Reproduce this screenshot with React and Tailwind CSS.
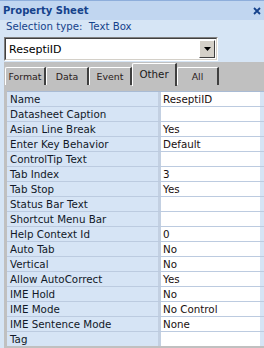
import React from "react";

const rows = [
  ["Name", "ReseptiID"],
  ["Datasheet Caption", ""],
  ["Asian Line Break", "Yes"],
  ["Enter Key Behavior", "Default"],
  ["ControlTip Text", ""],
  ["Tab Index", "3"],
  ["Tab Stop", "Yes"],
  ["Status Bar Text", ""],
  ["Shortcut Menu Bar", ""],
  ["Help Context Id", "0"],
  ["Auto Tab", "No"],
  ["Vertical", "No"],
  ["Allow AutoCorrect", "Yes"],
  ["IME Hold", "No"],
  ["IME Mode", "No Control"],
  ["IME Sentence Mode", "None"],
  ["Tag", ""],
];

function Tab({ label, w }) {
  return (
    <div
      className={`${w} h-[18px] flex items-center justify-center border-t border-l border-t-white border-l-white border-r-2 border-r-[#404040] rounded-tl-[2px] text-[#2a1a1a] text-[9.4px] leading-none whitespace-nowrap`}
    >
      {label}
    </div>
  );
}

export default function App() {
  return (
    <div
      className="w-[264px] h-[348px] overflow-hidden bg-[#d6e5f5] flex flex-col"
      style={{ fontFamily: '"DejaVu Sans", sans-serif' }}
    >
      <div className="h-[1px] bg-[#8eaedb]" />
      <div className="h-[19px] bg-[#c1d6f0] flex items-center justify-between pl-[3px] pr-[3px]">
        <span className="text-[10px] font-bold text-[#15428b] leading-none">Property Sheet</span>
        <svg width="8" height="8" viewBox="0 0 8 8">
          <path d="M1 1 L7 7 M7 1 L1 7" stroke="#15428b" strokeWidth="1.8" />
        </svg>
      </div>
      <div className="h-[13px] pl-[6px] text-[10.2px] leading-[13px] text-[#15428b] whitespace-pre">
        {"Selection type:  Text Box"}
      </div>
      <div className="mt-[4px] ml-[4px] w-[214px] h-[24px] border border-t-[#808080] border-l-[#808080] border-b-white border-r-white">
        <div className="w-full h-full border border-t-[#404040] border-l-[#404040] border-b-[#d4d0c8] border-r-[#d4d0c8] bg-white flex items-center">
          <span className="flex-1 pl-[3px] text-[11px] text-black leading-none">ReseptiID</span>
          <div className="w-[16px] h-[18px] mr-[1px] bg-[#d4d0c8] border border-t-white border-l-white border-b-[#404040] border-r-[#404040] flex items-center justify-center">
            <svg width="7" height="4" viewBox="0 0 7 4">
              <path d="M0 0 H7 L3.5 4 Z" fill="#000" />
            </svg>
          </div>
        </div>
      </div>
      <div className="mt-[1px] ml-[4px] flex-1 bg-[#c0c0c0] flex flex-col">
        <div className="h-[24px] flex items-end pl-[1px]">
          <div className="flex items-end h-[23px] pb-[1px]">
            <Tab label="Format" w="w-[41px]" />
            <Tab label="Data" w="w-[43px]" />
            <Tab label="Event" w="w-[43px]" />
          </div>
          <div className="w-[45px] h-[23px] flex items-start justify-center pt-[5px] border-t border-l border-t-white border-l-white border-r-2 border-r-[#404040] rounded-tl-[2px] text-[#1a1a1a] text-[10.3px] leading-none">
            Other
          </div>
          <div className="flex items-end h-[23px] pb-[1px]">
            <Tab label="All" w="w-[42px]" />
          </div>
        </div>
        <div className="mt-[5px] ml-[3px] border-t border-[#a9bbd4] bg-[#bccbe0] flex flex-col gap-[1px]">
          {rows.map(([k, v]) => (
            <div key={k} className="h-[14px] flex">
              <div className="w-[151px] bg-[#d6e4f5] pl-[3px] text-[10.3px] leading-[14px] text-[#111827] whitespace-nowrap">
                {k}
              </div>
              <div className="w-[3px] bg-[#c3d0e2]" />
              <div className="w-[99px] bg-white pl-[2px] text-[10.3px] leading-[14px] text-[#1a1010] whitespace-nowrap">
                {v}
              </div>
              <div className="flex-1 bg-[#d6e4f5]" />
            </div>
          ))}
        </div>
      </div>
    </div>
  );
}
